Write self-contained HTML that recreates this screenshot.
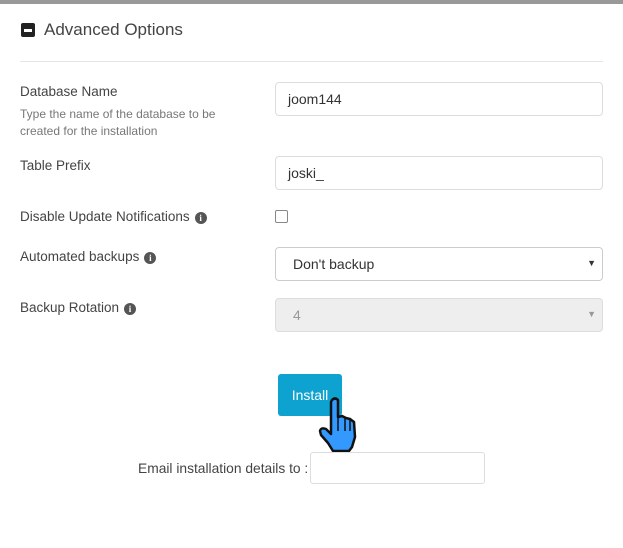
<!DOCTYPE html>
<html><head><style>
body{margin:0;width:623px;height:548px;background:#fff;font-family:"Liberation Sans",sans-serif;color:#444;position:relative;overflow:hidden}
.a{position:absolute}
.top{left:0;top:0;width:623px;height:4px;background:#999}
.inp{position:absolute;left:275px;width:328px;height:32px;border:1px solid #ddd;border-radius:4px;box-sizing:border-box;font-size:14px;color:#333;padding:8px 0 0 12px}
.lbl{font-size:13.5px;color:#444}
.info{display:inline-block;width:12px;height:12px;border-radius:50%;background:#555;color:#fff;font-size:9px;font-weight:bold;text-align:center;line-height:12px;vertical-align:0px;margin-left:5px;font-family:"Liberation Serif",serif}
.arr{position:absolute;right:6px;top:10px;font-size:9px;color:#333}
</style></head><body>
<div class="a top"></div>
<div class="a" style="left:21px;top:23px;width:14px;height:14px;background:#222;border-radius:2px"><div style="position:absolute;left:3px;top:6px;width:8px;height:3px;background:#fff"></div></div>
<div class="a" style="left:44px;top:20px;font-size:17px;color:#444">Advanced Options</div>
<div class="a" style="left:20px;top:61px;width:583px;height:1px;background:#e5e5e5"></div>

<div class="a lbl" style="left:20px;top:84px">Database Name</div>
<div class="a" style="left:20px;top:106px;font-size:12px;color:#777;line-height:17px">Type the name of the database to be<br>created for the installation</div>
<div class="inp" style="top:82px;height:34px">joom144</div>

<div class="a lbl" style="left:20px;top:158px">Table Prefix</div>
<div class="inp" style="top:156px;height:34px">joski_</div>

<div class="a lbl" style="left:20px;top:209px">Disable Update Notifications<span class="info">i</span></div>
<div class="a" style="left:275px;top:210px;width:11px;height:11px;border:1px solid #888;border-radius:2px"></div>

<div class="a lbl" style="left:20px;top:249px">Automated backups<span class="info">i</span></div>
<div class="inp" style="top:247px;height:34px;padding-left:17px;border-color:#ccc">Don't backup<span class="arr">▼</span></div>

<div class="a lbl" style="left:20px;top:300px">Backup Rotation<span class="info">i</span></div>
<div class="inp" style="top:298px;height:34px;padding-left:17px;background:#eee;color:#999">4<span class="arr" style="color:#999">▼</span></div>

<div class="a" style="left:278px;top:374px;width:64px;height:42px;background:#0ea2d0;border-radius:3px;color:#fff;font-size:14px;text-align:center;line-height:42px">Install</div>
<svg class="a" style="left:317px;top:397px" width="44" height="58" viewBox="0 0 44 58">
<path d="M15 3 Q18 0 21 3 L21 20 L25 19 L29 21 L33 22 L37 25 L38 40 L35 50 L32 54 L16 54 L11 46 L4 38 L3 34 Q4 30 9 32 L14 37 L14 5 Z" fill="#3399ff" stroke="#111" stroke-width="2.5" stroke-linejoin="round"/>
<path d="M21 20 L21 34 M28 21 L28 34 M33 23 L33 34" stroke="#111" stroke-width="1.5"/>
</svg>

<div class="a lbl" style="left:138px;top:461px;font-size:13.8px">Email installation details to :</div>
<div class="a" style="left:310px;top:452px;width:175px;height:32px;border:1px solid #ddd;border-radius:3px;box-sizing:border-box"></div>
</body></html>
